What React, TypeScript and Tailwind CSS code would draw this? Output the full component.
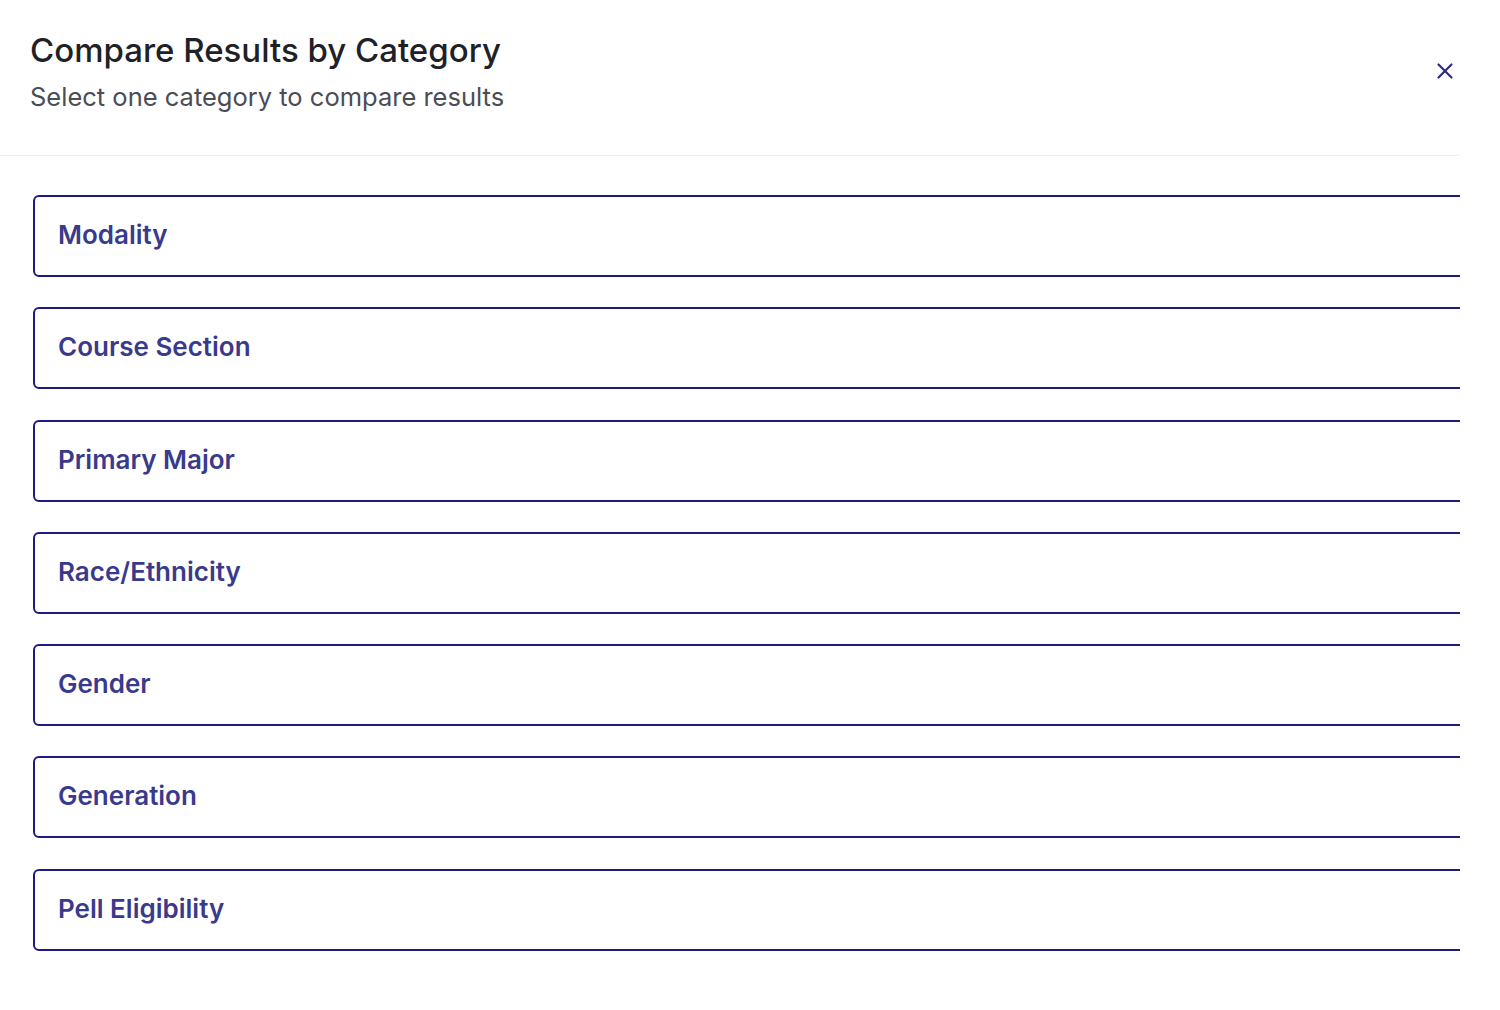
import { X } from "lucide-react";

const categories = [
  "Modality",
  "Course Section",
  "Primary Major",
  "Race/Ethnicity",
  "Gender",
  "Generation",
  "Pell Eligibility",
];

export default function App() {
  return (
    <div className="w-[1500px] h-[1010px] bg-white font-['Inter',sans-serif]">
      <div className="w-[1460px] overflow-hidden">
        <div className="flex items-start justify-between pl-[30px] pr-[2px] pt-[30px] pb-[42px] border-b border-[#f0f0f2]">
          <div>
            <h2 className="text-[33px] leading-[40px] text-[#1f2128] font-medium">
              Compare Results by Category
            </h2>
            <p className="mt-[11px] text-[25.5px] leading-[32px] text-[#4b4d55]">
              Select one category to compare results
            </p>
          </div>
          <button className="mt-[28px] text-[#2b2a86]">
            <X size={26} strokeWidth={2} />
          </button>
        </div>
        <div className="pt-[39px] pl-[33px] flex flex-col gap-[30.3px]">
          {categories.map((c) => (
            <div
              key={c}
              className="w-[1500px] h-[82px] flex items-center px-[23px] pb-[3px] border-2 border-[#1d1a80] rounded-[6px]"
            >
              <span className="text-[26px] font-semibold text-[#3a3a8c]">
                {c}
              </span>
            </div>
          ))}
        </div>
      </div>
    </div>
  );
}
